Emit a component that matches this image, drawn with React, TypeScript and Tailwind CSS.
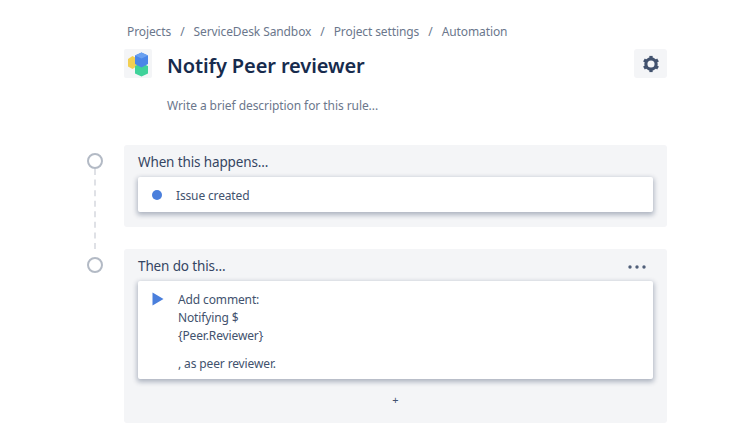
import React from "react";

const font = "font-['Noto_Sans','Open_Sans',sans-serif]";

function Crumbs() {
  const items = ["Projects", "ServiceDesk Sandbox", "Project settings", "Automation"];
  return (
    <div className="flex items-center h-[20px] pl-[3px] text-[12px] tracking-[-0.1px] text-[#6b778c]">
      {items.map((item, i) => (
        <React.Fragment key={item}>
          {i > 0 && <span className="px-[9px]">/</span>}
          <span>{item}</span>
        </React.Fragment>
      ))}
    </div>
  );
}

function ProjectIcon() {
  return (
    <div className="w-[28px] h-[29px] bg-[#f4f5f7] rounded-[2px] shrink-0">
      <svg width="28" height="29" viewBox="0 0 28 29">
        <path d="M8.5 7 L13 9.5 L13 17 L8.5 20 L4 17.5 L4 10 Z" fill="#f2cf52" />
        <path d="M17.5 14 L24 17 L24 24.5 L17.5 27.5 L11 24.5 L11 17 Z" fill="#3fd29a" />
        <path d="M17.5 3.5 L24 6.5 L24 15 L17.5 18.5 L11 15 L11 6.5 Z" fill="#4a86e8" />
        <path d="M17.5 3.5 L24 6.5 L17.5 9.5 L11 6.5 Z" fill="#6aa0f0" />
      </svg>
    </div>
  );
}

function GearIcon() {
  return (
    <svg width="18" height="18" viewBox="0 0 24 24" fill="none">
      <circle cx="12" cy="12" r="6.85" stroke="#42526e" strokeWidth="4.2" />
      <g stroke="#42526e" strokeWidth="4.4">
        <path d="M12 1.2v3" />
        <path d="M12 19.8v3" />
        <path d="M2.6 6.6l2.6 1.5" />
        <path d="M18.8 15.9l2.6 1.5" />
        <path d="M2.6 17.4l2.6-1.5" />
        <path d="M18.8 8.1l2.6-1.5" />
      </g>
    </svg>
  );
}

function Dots() {
  return (
    <svg width="18" height="4" viewBox="0 0 18 4" className="mt-[1px] mr-[7px]">
      <circle cx="2" cy="2" r="1.7" fill="#505f79" />
      <circle cx="9" cy="2" r="1.7" fill="#505f79" />
      <circle cx="16" cy="2" r="1.7" fill="#505f79" />
    </svg>
  );
}

function Circle() {
  return <div className="w-[16px] h-[16px] rounded-full border-2 border-[#b3bac5] bg-white shrink-0" />;
}

const innerCard = "bg-white rounded-[2px] shadow-[0_2px_5px_1px_rgba(9,30,66,0.3)]";
const cardTitle = "text-[13.5px] leading-[19px] tracking-[-0.13px] text-[#344563]";

export default function App() {
  return (
    <div className={`w-[734px] h-[443px] bg-white overflow-hidden pt-[22px] pl-[87px] ${font}`}>
      <div className="ml-[37px] w-[543px]">
        <Crumbs />
        <div className="flex items-start justify-between mt-[7px]">
          <div className="flex items-start">
            <ProjectIcon />
            <h1 className="ml-[15px] mt-[2px] text-[20px] leading-[29px] tracking-[-0.1px] font-semibold text-[#172b4d]">Notify Peer reviewer</h1>
          </div>
          <button className="w-[33px] h-[29px] bg-[#f4f5f7] rounded-[3px] flex items-center justify-center">
            <GearIcon />
          </button>
        </div>
        <div className="ml-[43px] mt-[16px] h-[20px] leading-[20px] text-[12px] tracking-[-0.07px] text-[#6b778c]">Write a brief description for this rule...</div>
      </div>

      <div className="mt-[29px]">
        <div className="flex pb-[22px]">
          <div className="w-[16px] mr-[21px] pt-[8px] mb-[-22px] flex flex-col items-center">
            <Circle />
            <div className="flex-1 border-l-2 border-dashed border-[#dfe1e6]" />
          </div>
          <div className="w-[543px] h-[82px] bg-[#f4f5f7] rounded-[3px] px-[14px] pt-[8px]">
            <div className={`h-[19px] ${cardTitle}`}>When this happens...</div>
            <div className={`${innerCard} mt-[5px] h-[35px] flex items-center pl-[14px]`}>
              <span className="w-[10px] h-[10px] rounded-full bg-[#4a7fdc]" />
              <span className="ml-[14px] pt-[2px] text-[12px] tracking-[-0.15px] text-[#42526e]">Issue created</span>
            </div>
          </div>
        </div>

        <div className="flex">
          <div className="w-[16px] mr-[21px] pt-[8px]">
            <Circle />
          </div>
          <div className="w-[543px] h-[174px] bg-[#f4f5f7] rounded-[3px] px-[14px] pt-[8px]">
            <div className="flex items-center justify-between h-[19px]">
              <span className={cardTitle}>Then do this...</span>
              <Dots />
            </div>
            <div className={`${innerCard} mt-[5px] h-[98px] flex pl-[14px] pt-[10px]`}>
              <svg width="12" height="14" viewBox="0 0 12 14" className="mt-[1px] shrink-0">
                <path d="M0.5 0.5 L11.5 7 L0.5 13.5 Z" fill="#4a7fdc" />
              </svg>
              <div className="ml-[14px] text-[12px] leading-[18px] tracking-[-0.13px] text-[#42526e]">
                <div>Add comment:</div>
                <div>Notifying $</div>
                <div>{"{Peer.Reviewer}"}</div>
                <div className="mt-[10px]">, as peer reviewer.</div>
              </div>
            </div>
            <div className="mt-[13px] text-center text-[11px] leading-[16px] text-[#42526e]">+</div>
          </div>
        </div>
      </div>
    </div>
  );
}
